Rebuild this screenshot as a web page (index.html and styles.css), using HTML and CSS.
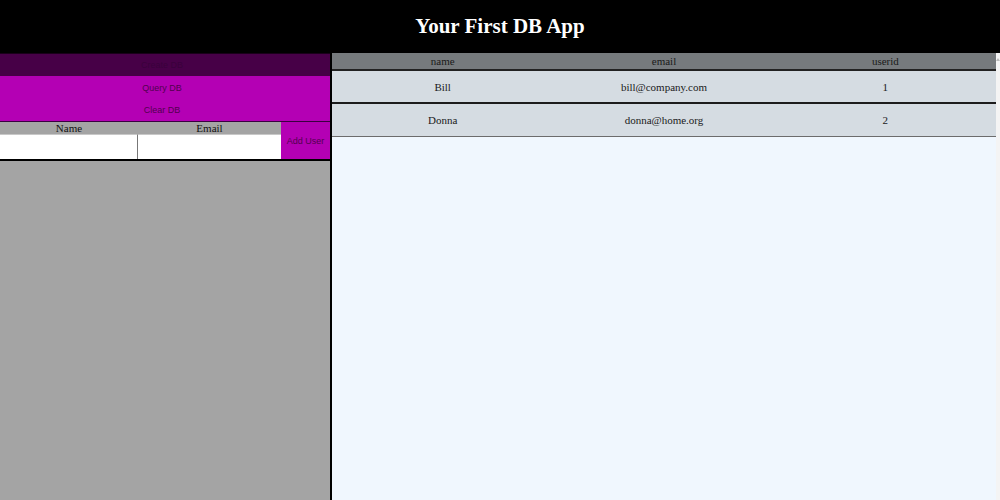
FILE: index.html
```html
<!DOCTYPE html>
<html>
<head>
<meta charset="utf-8">
<link rel="stylesheet" href="styles.css">
</head>
<body>
<header class="top">
  <h1 class="title">Your First DB App</h1>
</header>
<main class="main">
  <section class="left">
    <button class="btn btn-dark">Create DB</button>
    <button class="btn btn-magenta">Query DB</button>
    <button class="btn btn-magenta btn-last">Clear DB</button>
    <form class="form">
      <div class="fields">
        <div class="field">
          <label class="label">Name</label>
          <input class="input input-first" type="text">
        </div>
        <div class="field">
          <label class="label">Email</label>
          <input class="input" type="text">
        </div>
      </div>
      <button class="add" type="button">Add User</button>
    </form>
  </section>
  <section class="right">
    <div class="table-wrap">
      <table class="table">
        <thead>
          <tr class="head"><th>name</th><th>email</th><th>userid</th></tr>
        </thead>
        <tbody>
          <tr class="row row-dark"><td>Bill</td><td>bill@company.com</td><td>1</td></tr>
          <tr class="row row-light"><td>Donna</td><td>donna@home.org</td><td>2</td></tr>
        </tbody>
      </table>
    </div>
    <div class="scroll"><span class="arrow"></span></div>
  </section>
</main>
</body>
</html>
```
FILE: styles.css
```css
* { box-sizing: border-box; }
html, body { margin: 0; padding: 0; height: 100%; }
body {
  font-family: "Liberation Serif", "Times New Roman", serif;
  background: #000;
  display: flex;
  flex-direction: column;
  height: 500px;
  overflow: hidden;
}
.top {
  height: 53px;
  background: #000;
  display: flex;
  align-items: center;
  justify-content: center;
}
.title {
  margin: 0;
  color: #fff;
  font-size: 21px;
  font-weight: bold;
  line-height: 1;
  padding-bottom: 1px;
}
.main {
  flex: 1;
  display: flex;
  min-height: 0;
}
.left {
  width: 332px;
  background: #a4a4a4;
  border-right: 2px solid #000;
  display: flex;
  flex-direction: column;
}
.btn {
  border: none;
  margin: 0;
  padding: 0 6px 0 0;
  width: 100%;
  font-family: "Liberation Sans", Arial, sans-serif;
  font-size: 9px;
  display: flex;
  align-items: center;
  justify-content: center;
}
.btn-dark {
  height: 23px;
  background: #470047;
  color: #3a003c;
  border-top: 1px solid #1a001a;
}
.btn-magenta {
  height: 23px;
  background: #b400b4;
  color: #52004f;
}
.btn-last {
  height: 23px;
  border-bottom: 1px solid #3a0040;
}
.form {
  margin: 0;
  display: flex;
  height: 39px;
  border-bottom: 2px solid #000;
}
.fields {
  width: 281px;
  display: flex;
}
.field {
  display: flex;
  flex-direction: column;
}
.field:first-child { width: 138px; }
.field:last-child { width: 143px; }
.label {
  height: 12px;
  font-size: 11px;
  font-weight: normal;
  line-height: 12px;
  text-align: center;
  color: #111;
}
.input {
  flex: 1;
  width: 100%;
  border: none;
  background: #fff;
  margin: 0;
  padding: 0;
  border-top: 1px solid #c8c8c8;
}
.input-first { border-right: 1px solid #777; }
.add {
  flex: 1;
  border: none;
  margin: 0;
  padding: 0;
  background: #b400b4;
  color: #52004f;
  font-family: "Liberation Sans", Arial, sans-serif;
  font-size: 9px;
}
.right {
  flex: 1;
  background: #f0f7fe;
  display: flex;
}
.table-wrap { flex: 1; }
.table {
  width: 100%;
  border-collapse: collapse;
  table-layout: fixed;
  font-size: 11px;
  color: #1a1a1a;
}
.head th {
  height: 17px;
  background: #767a7d;
  font-weight: normal;
  padding: 0;
  border-bottom: 2px solid #222;
}
.row td {
  height: 33px;
  text-align: center;
  padding: 0;
  background: #d5dce2;
}
.row-dark td { border-bottom: 2px solid #1c1c1c; }
.row-light td { border-bottom: 1px solid #6c6c6c; }
.scroll {
  width: 4px;
  background: #f4f4f4;
  position: relative;
}
.arrow {
  position: absolute;
  top: 5px;
  left: 0;
  width: 0;
  height: 0;
  border-left: 2px solid transparent;
  border-right: 2px solid transparent;
  border-bottom: 3px solid #bbb;
}
```
